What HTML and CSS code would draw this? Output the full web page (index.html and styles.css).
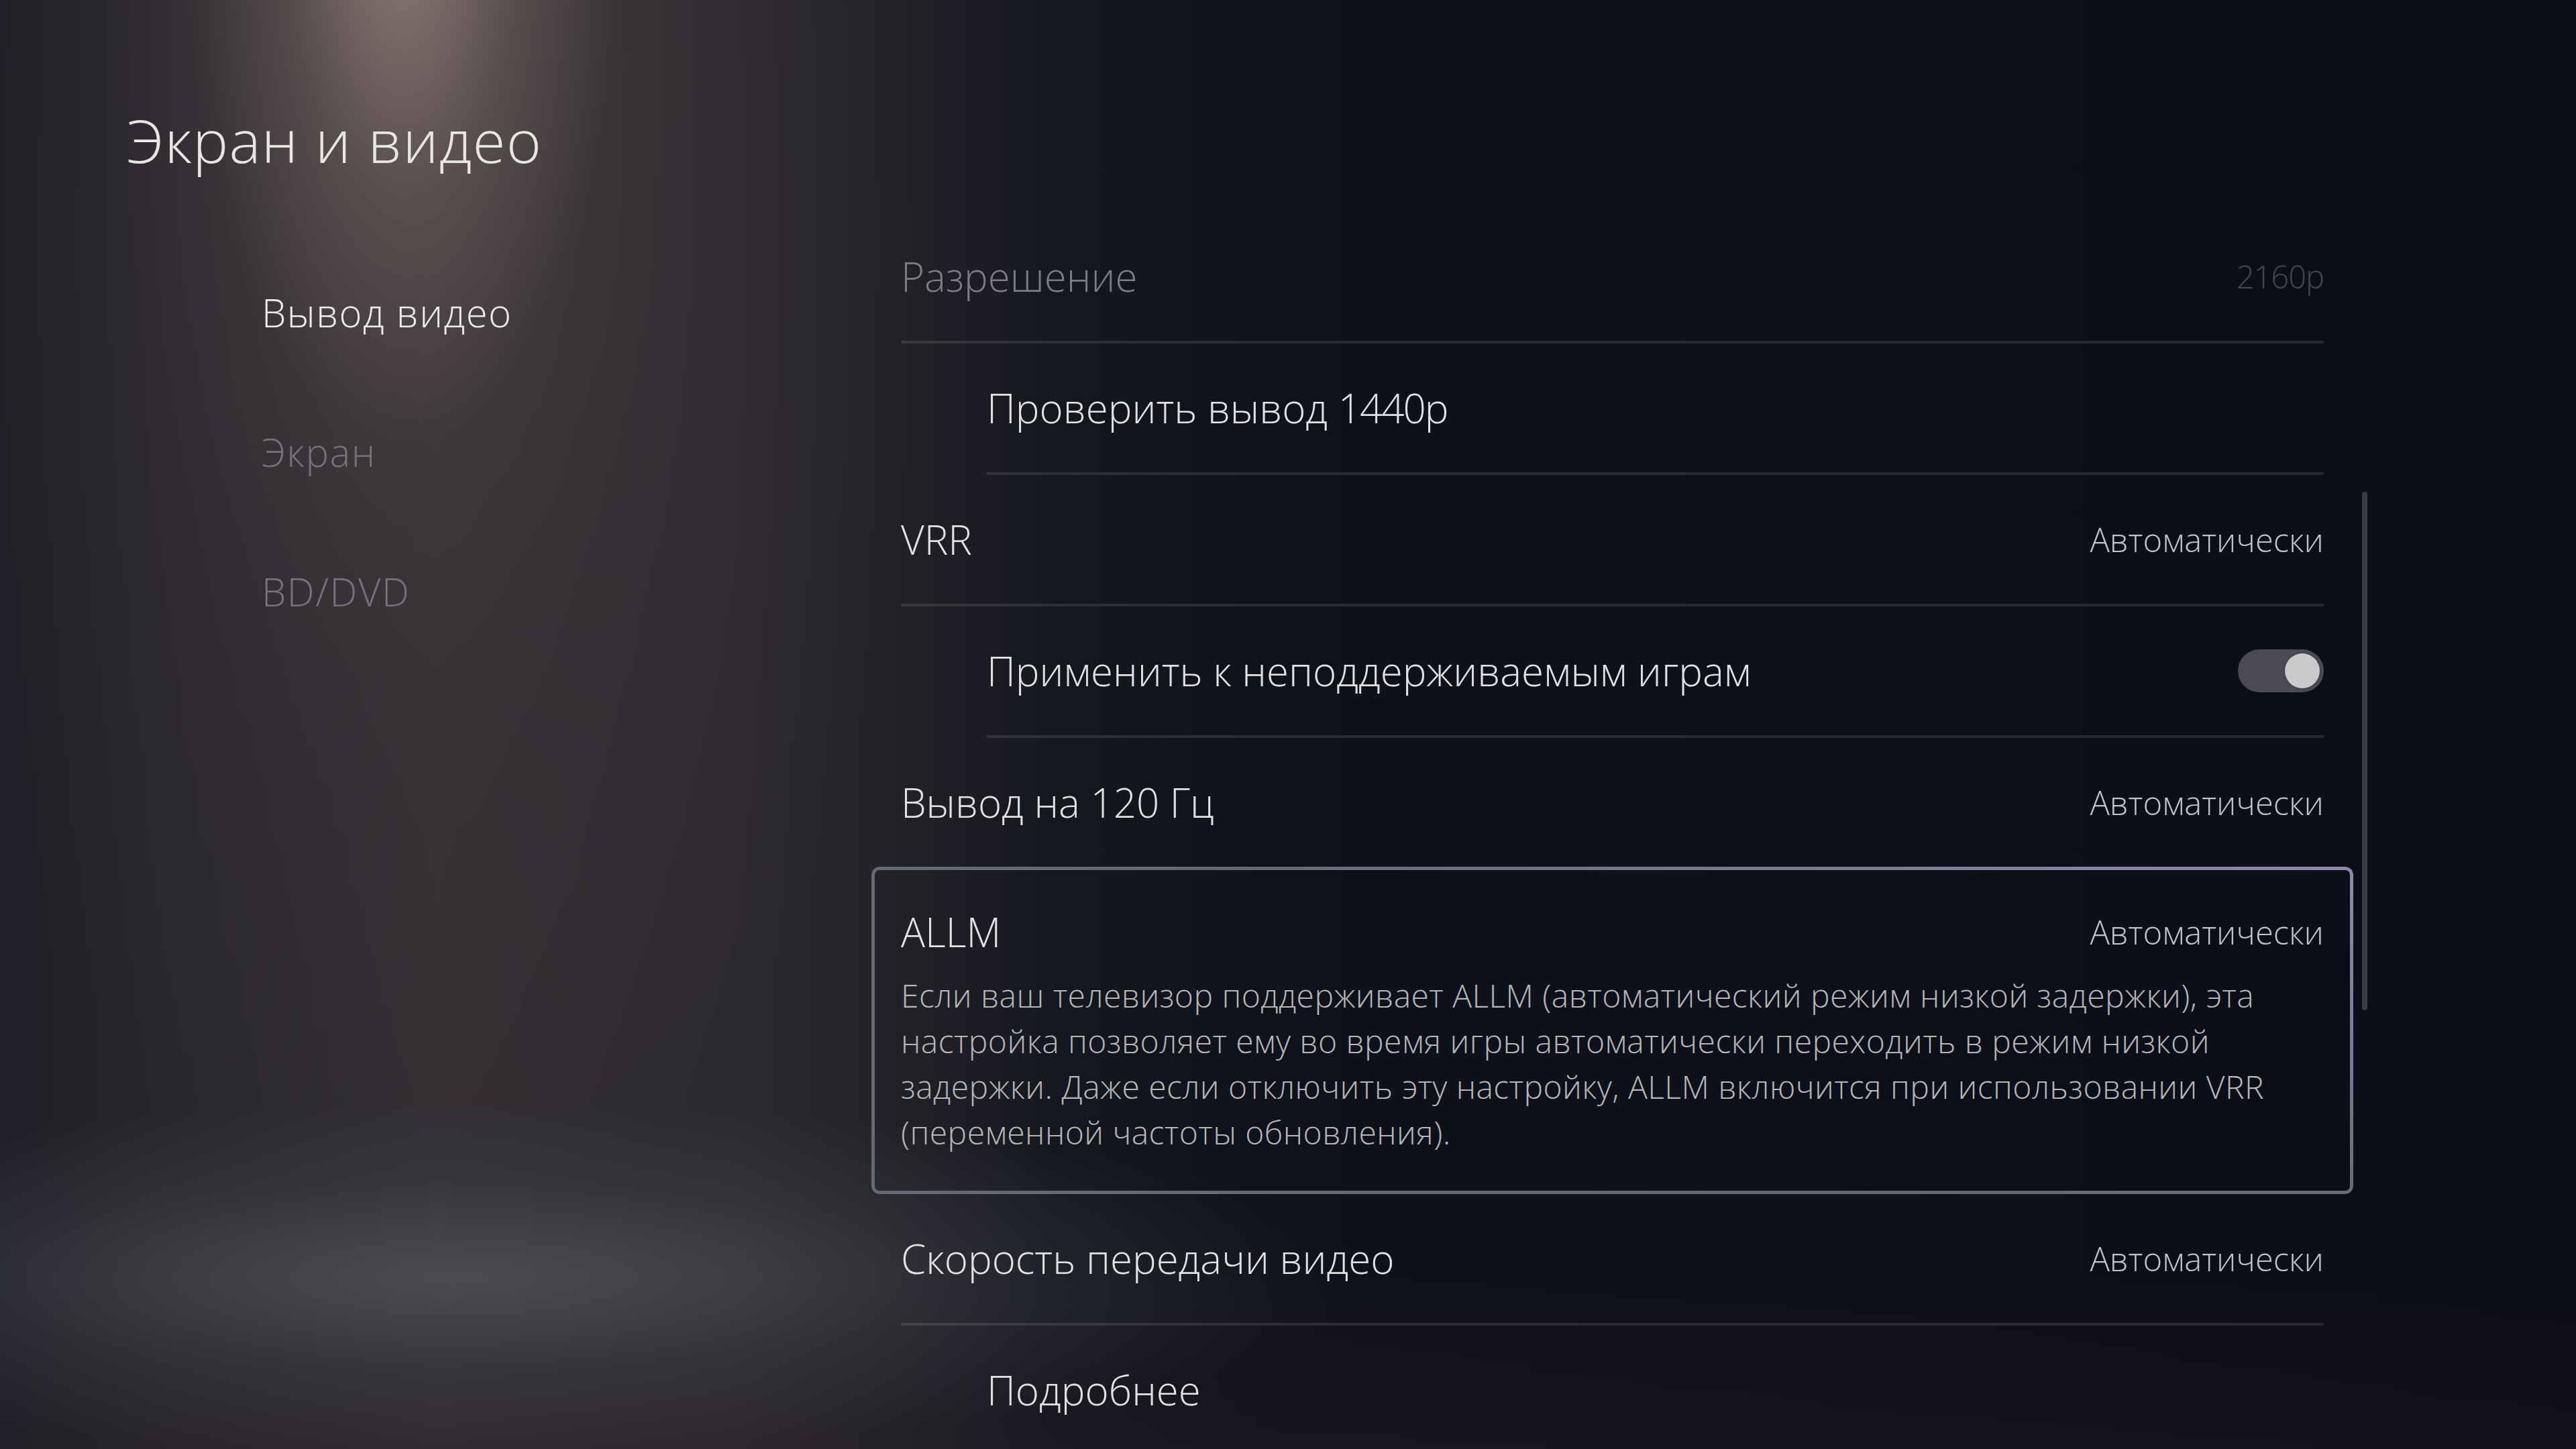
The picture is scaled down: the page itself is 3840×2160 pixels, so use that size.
FILE: index.html
```html
<!DOCTYPE html>
<html lang="ru">
<head>
<meta charset="utf-8">
<title>Экран и видео</title>
<link rel="stylesheet" href="styles.css">
</head>
<body>
<div class="screen">
  <aside class="side">
    <h1 class="title">Экран и видео</h1>
    <nav class="menu">
      <div class="menu-item active">Вывод видео</div>
      <div class="menu-item">Экран</div>
      <div class="menu-item">BD/DVD</div>
    </nav>
  </aside>
  <main class="content">
    <div class="list">
      <div class="row faded">
        <span class="label">Разрешение</span>
        <span class="value">2160p</span>
      </div>
      <div class="row sub">
        <span class="label">Проверить вывод <span class="num">1440p</span></span>
      </div>
      <div class="row">
        <span class="label">VRR</span>
        <span class="value">Автоматически</span>
      </div>
      <div class="row sub">
        <span class="label">Применить к неподдерживаемым играм</span>
        <span class="toggle"><span class="knob"></span></span>
      </div>
      <div class="row no-border">
        <span class="label">Вывод на 120 Гц</span>
        <span class="value">Автоматически</span>
      </div>
      <div class="focus">
        <div class="focus-head">
          <span class="label">ALLM</span>
          <span class="value">Автоматически</span>
        </div>
        <p class="desc">Если ваш телевизор поддерживает ALLM (автоматический режим низкой задержки), эта<br>настройка позволяет ему во время игры автоматически переходить в режим низкой<br>задержки. Даже если отключить эту настройку, ALLM включится при использовании VRR<br>(переменной частоты обновления).</p>
      </div>
      <div class="row">
        <span class="label">Скорость передачи видео</span>
        <span class="value">Автоматически</span>
      </div>
      <div class="row sub no-border">
        <span class="label">Подробнее</span>
      </div>
    </div>
    <div class="scrollbar"></div>
  </main>
</div>
</body>
</html>
```

FILE: styles.css
```css
html, body {
  margin: 0;
  padding: 0;
}

body {
  width: 3840px;
  height: 2160px;
  overflow: hidden;
  font-family: "Open Sans", "Noto Sans", sans-serif;
  font-weight: 300;
  background:
    radial-gradient(ellipse 470px 1150px at 600px -140px, rgba(170, 150, 140, 0.75) 0%, rgba(130, 113, 108, 0.40) 38%, rgba(85, 72, 74, 0.12) 70%, rgba(0, 0, 0, 0) 100%),
    radial-gradient(ellipse 780px 1500px at 620px 350px, rgba(95, 78, 78, 0.30) 0%, rgba(80, 66, 68, 0.12) 60%, rgba(0, 0, 0, 0) 100%),
    radial-gradient(ellipse 1350px 260px at 680px 1905px, rgba(86, 88, 95, 0.70) 0%, rgba(68, 70, 78, 0.32) 55%, rgba(0, 0, 0, 0) 100%),
    linear-gradient(180deg, rgba(0, 0, 0, 0) 0, rgba(0, 0, 0, 0) 1900px, rgba(45, 32, 42, 0.25) 2160px),
    linear-gradient(90deg, #1e1f27 0, #29272d 250px, #322f33 650px, #2d2a2f 1100px, #24232a 1300px, #161820 1560px, #10121b 1900px, #0e1019 2800px, #0b0d17 3840px);
}

.screen {
  display: flex;
  height: 2160px;
}

/* ---------- left side ---------- */
.side {
  width: 1343px;
  flex: none;
}

.title {
  margin: 164px 0 0 189px;
  font-size: 89px;
  line-height: 1;
  font-weight: 300;
  letter-spacing: 1.2px;
  color: #e8e6e3;
  white-space: nowrap;
}

.menu {
  margin-top: 109px;
  padding-left: 390px;
}

.menu-item {
  font-size: 58px;
  line-height: 208px;
  letter-spacing: 1.5px;
  color: #76727a;
  white-space: nowrap;
}

.menu-item.active {
  color: #ececec;
}

/* ---------- content ---------- */
.content {
  display: flex;
  align-items: flex-start;
  padding-top: 316px;
}

.list {
  width: 2121px;
  flex: none;
}

.row {
  height: 192px;
  border-bottom: 4px solid rgba(255, 255, 255, 0.11);
  display: flex;
  align-items: center;
  justify-content: space-between;
}

.row.sub {
  margin-left: 128px;
}

.row.no-border {
  border-bottom: none;
}

.label {
  font-size: 60px;
  color: #e2e2e4;
  white-space: nowrap;
}

.num {
  letter-spacing: -2px;
}

.value {
  font-size: 49px;
  color: #c3c4c8;
  white-space: nowrap;
}

.row.faded .label {
  color: #7b7c84;
}

.row.faded .value {
  font-size: 47px;
  letter-spacing: -1px;
  color: #44464f;
}

.toggle {
  width: 128px;
  height: 64px;
  box-sizing: border-box;
  padding: 6px;
  border-radius: 32px;
  background: #494a54;
  display: flex;
  justify-content: flex-end;
}

.knob {
  width: 52px;
  height: 52px;
  border-radius: 50%;
  background: #c9cac9;
  box-shadow: 0 0 3px rgba(0, 0, 0, 0.35);
}

.focus {
  position: relative;
  margin: 0 -44px;
  padding: 56px 44px 58px;
  border-radius: 12px;
}

.focus::before {
  content: "";
  position: absolute;
  inset: 0;
  padding: 5px;
  border-radius: 12px;
  background: radial-gradient(ellipse 1700px 520px at 100% 0%, #8f89a9 0%, #7d7c94 45%, #646974 100%);
  -webkit-mask: linear-gradient(#000 0 0) content-box, linear-gradient(#000 0 0);
  -webkit-mask-composite: xor;
  mask-composite: exclude;
}

.focus-head {
  display: flex;
  align-items: center;
  justify-content: space-between;
}

.desc {
  margin: 20px 0 0;
  font-size: 48px;
  line-height: 68px;
  letter-spacing: 0.45px;
  color: #b6b7bb;
  white-space: nowrap;
}

.scrollbar {
  flex: none;
  width: 8px;
  height: 773px;
  margin-left: 57px;
  margin-top: 417px;
  border-radius: 4px;
  background: #3a3b45;
}
```
